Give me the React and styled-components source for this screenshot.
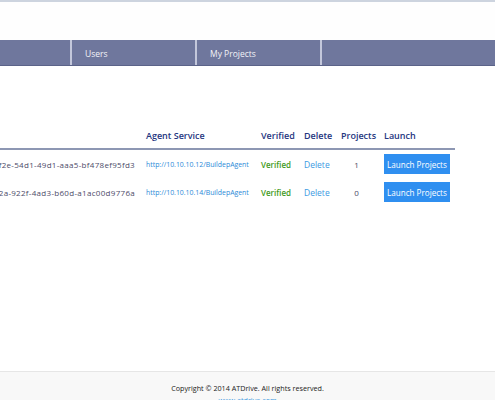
import styled, { createGlobalStyle } from "styled-components";

const GlobalStyle = createGlobalStyle`
	html, body {
		margin: 0;
		padding: 0;
		background: #ffffff;
		font-family: "Open Sans", "Noto Sans", sans-serif;
		overflow: hidden;
	}
`;

const Page = styled.div`
	width: 495px;
	border-top: 2px solid #cdd4df;
`;

const Header = styled.header`
	height: 38px;
	background: #fefefe;
`;

const Nav = styled.nav`
	display: flex;
	height: 25px;
	background: #6f779d;
	border-bottom: 1px solid #5b6389;
`;

const NavItem = styled.div`
	flex: 0 0 ${(p) => p.$width}px;
	display: flex;
	align-items: center;
	padding-left: 13px;
	padding-top: 2px;
	box-sizing: border-box;
	border-right: 2px solid #c3c7db;
	color: #f2f3f8;
	font-size: 8.5px;

	&:last-child {
		border-right: none;
		flex: 1;
	}
`;

const Main = styled.main`
	height: 305px;
	padding-top: 60px;
	box-sizing: border-box;
`;

const Grid = styled.div`
	display: grid;
	grid-template-columns: 168px 115px 43px 37px 43px 71px;
	width: 477px;
	margin-left: -22px;
`;

const HeadCell = styled.div`
	height: 24px;
	padding-bottom: 4px;
	box-sizing: border-box;
	display: flex;
	align-items: center;
	border-bottom: 2px solid #8d97b3;
	color: #253680;
	font-size: 9px;
	font-weight: 600;
`;

const Cell = styled.div`
	height: 28px;
	display: flex;
	align-items: center;
	justify-content: ${(p) => (p.$center ? "center" : "flex-start")};
	padding-right: ${(p) => (p.$center ? "12px" : "0")};
	white-space: nowrap;
	font-size: 8px;
	color: #4b4a66;
`;

const Guid = styled(Cell)`
	justify-content: flex-end;
	padding-right: 11px;
	font-size: 8px;
	letter-spacing: 0.3px;
	color: #4c4a68;
`;

const ServiceLink = styled.a`
	color: #2b8ad8;
	font-size: 6.9px;
	text-decoration: none;
`;

const Verified = styled.span`
	color: #3f9a1c;
	font-weight: 600;
	font-size: 8px;
`;

const DeleteLink = styled.a`
	color: #3c9ae2;
	font-size: 8.5px;
	text-decoration: none;
`;

const LaunchButton = styled.button`
	height: 20px;
	padding: 0 3px;
	border: none;
	background: #2f8ff0;
	color: #ffffff;
	font-family: inherit;
	font-size: 8.1px;
	white-space: nowrap;
`;

const Footer = styled.footer`
	border-top: 1px solid #e6e6e6;
	background: #f8f8f8;
	padding-top: 11px;
	text-align: center;
	height: 40px;
`;

const Copyright = styled.div`
	font-size: 7.2px;
	color: #222222;
`;

const Site = styled.a`
	display: block;
	margin-top: 2px;
	font-size: 7.2px;
	color: #3c9ae2;
	text-decoration: none;
`;

const agents = [
	{
		guid: "3b7e6f2e-54d1-49d1-aaa5-bf478ef95fd3",
		url: "http://10.10.10.12/BuildepAgent",
		projects: 1,
	},
	{
		guid: "9c41af2a-922f-4ad3-b60d-a1ac00d9776a",
		url: "http://10.10.10.14/BuildepAgent",
		projects: 0,
	},
];

function App() {
	return (
		<>
			<GlobalStyle />
			<Page>
				<Header />
				<Nav>
					<NavItem $width={72} />
					<NavItem $width={125}>Users</NavItem>
					<NavItem $width={125}>My Projects</NavItem>
					<NavItem />
				</Nav>

				<Main>
					<Grid>
						<HeadCell />
						<HeadCell>Agent Service</HeadCell>
						<HeadCell>Verified</HeadCell>
						<HeadCell>Delete</HeadCell>
						<HeadCell>Projects</HeadCell>
						<HeadCell>Launch</HeadCell>

						{agents.map((agent) => (
							<>
								<Guid key={agent.guid}>{agent.guid}</Guid>
								<Cell>
									<ServiceLink href="#">{agent.url}</ServiceLink>
								</Cell>
								<Cell>
									<Verified>Verified</Verified>
								</Cell>
								<Cell>
									<DeleteLink href="#">Delete</DeleteLink>
								</Cell>
								<Cell $center>{agent.projects}</Cell>
								<Cell>
									<LaunchButton>Launch Projects</LaunchButton>
								</Cell>
							</>
						))}
					</Grid>
				</Main>

				<Footer>
					<Copyright>Copyright © 2014 ATDrive. All rights reserved.</Copyright>
					<Site href="#">www.atdrive.com</Site>
				</Footer>
			</Page>
		</>
	);
}

export default App;
